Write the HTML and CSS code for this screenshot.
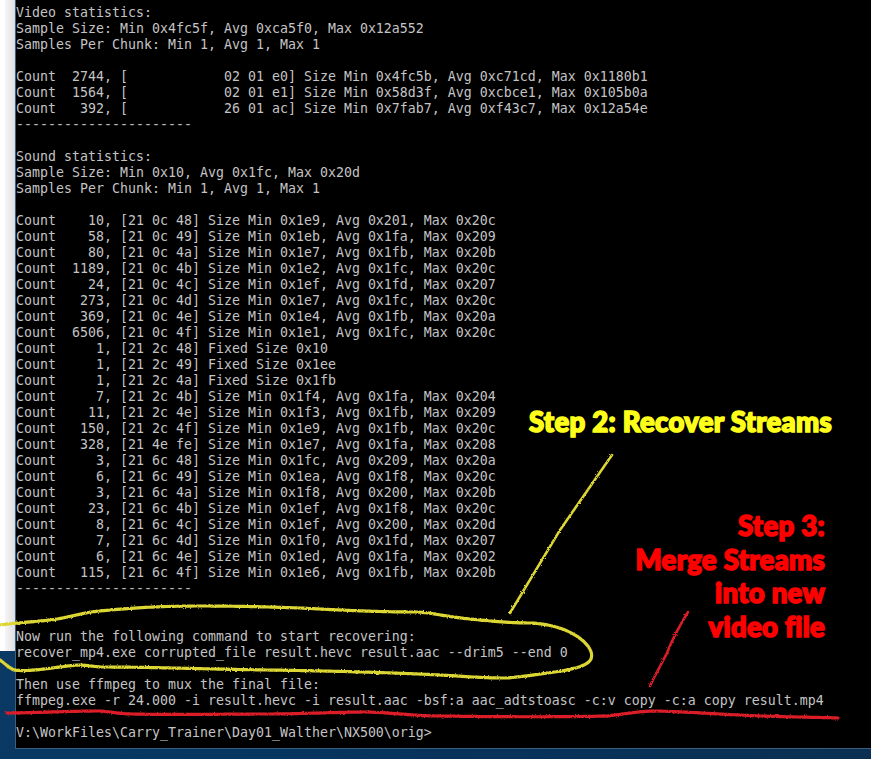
FILE: index.html
```html
<!DOCTYPE html>
<html lang="en">
<head>
<meta charset="utf-8">
<title>recover_mp4</title>
<link rel="stylesheet" href="styles.css">
</head>
<body>
<div class="desktop">
  <div class="behind"></div>
  <main class="console">
<pre class="output">Video statistics:
Sample Size: Min 0x4fc5f, Avg 0xca5f0, Max 0x12a552
Samples Per Chunk: Min 1, Avg 1, Max 1

Count  2744, [            02 01 e0] Size Min 0x4fc5b, Avg 0xc71cd, Max 0x1180b1
Count  1564, [            02 01 e1] Size Min 0x58d3f, Avg 0xcbce1, Max 0x105b0a
Count   392, [            26 01 ac] Size Min 0x7fab7, Avg 0xf43c7, Max 0x12a54e
----------------------

Sound statistics:
Sample Size: Min 0x10, Avg 0x1fc, Max 0x20d
Samples Per Chunk: Min 1, Avg 1, Max 1

Count    10, [21 0c 48] Size Min 0x1e9, Avg 0x201, Max 0x20c
Count    58, [21 0c 49] Size Min 0x1eb, Avg 0x1fa, Max 0x209
Count    80, [21 0c 4a] Size Min 0x1e7, Avg 0x1fb, Max 0x20b
Count  1189, [21 0c 4b] Size Min 0x1e2, Avg 0x1fc, Max 0x20c
Count    24, [21 0c 4c] Size Min 0x1ef, Avg 0x1fd, Max 0x207
Count   273, [21 0c 4d] Size Min 0x1e7, Avg 0x1fc, Max 0x20c
Count   369, [21 0c 4e] Size Min 0x1e4, Avg 0x1fb, Max 0x20a
Count  6506, [21 0c 4f] Size Min 0x1e1, Avg 0x1fc, Max 0x20c
Count     1, [21 2c 48] Fixed Size 0x10
Count     1, [21 2c 49] Fixed Size 0x1ee
Count     1, [21 2c 4a] Fixed Size 0x1fb
Count     7, [21 2c 4b] Size Min 0x1f4, Avg 0x1fa, Max 0x204
Count    11, [21 2c 4e] Size Min 0x1f3, Avg 0x1fb, Max 0x209
Count   150, [21 2c 4f] Size Min 0x1e9, Avg 0x1fb, Max 0x20c
Count   328, [21 4e fe] Size Min 0x1e7, Avg 0x1fa, Max 0x208
Count     3, [21 6c 48] Size Min 0x1fc, Avg 0x209, Max 0x20a
Count     6, [21 6c 49] Size Min 0x1ea, Avg 0x1f8, Max 0x20c
Count     3, [21 6c 4a] Size Min 0x1f8, Avg 0x200, Max 0x20b
Count    23, [21 6c 4b] Size Min 0x1ef, Avg 0x1f8, Max 0x20c
Count     8, [21 6c 4c] Size Min 0x1ef, Avg 0x200, Max 0x20d
Count     7, [21 6c 4d] Size Min 0x1f0, Avg 0x1fd, Max 0x207
Count     6, [21 6c 4e] Size Min 0x1ed, Avg 0x1fa, Max 0x202
Count   115, [21 6c 4f] Size Min 0x1e6, Avg 0x1fb, Max 0x20b
----------------------


Now run the following command to start recovering:
recover_mp4.exe corrupted_file result.hevc result.aac --drim5 --end 0

Then use ffmpeg to mux the final file:
ffmpeg.exe -r 24.000 -i result.hevc -i result.aac -bsf:a aac_adtstoasc -c:v copy -c:a copy result.mp4

V:\WorkFiles\Carry_Trainer\Day01_Walther\NX500\orig&gt;</pre>
  </main>
  <svg class="scribbles" width="871" height="759" viewBox="0 0 871 759" aria-hidden="true">
    <defs>
      <filter id="rough" x="0" y="0" width="871" height="759" filterUnits="userSpaceOnUse">
        <feTurbulence type="fractalNoise" baseFrequency="0.7" numOctaves="2" seed="4"/>
        <feDisplacementMap in="SourceGraphic" scale="2.5"/>
      </filter>
    </defs>
    <g class="ink" filter="url(#rough)">
      <path class="ink-yellow" d="M0 625C14 623 32 622 50 620C68 618 84 612 100 611C130 608 160 606 200 606C240 606 270 607 300 608C340 610 375 612 415 612C430 612 440 616 470 619C490 621 510 623 530 623C552 624 570 630 582 640C590 647 593 653 591 659C587 666 576 668 562 671C540 674 522 677 505 678C480 678 460 676 440 675C400 673 340 671 267 670C200 669 150 667 100 667C90 666 80 664 68 666C50 668 30 672 14 670C8 667 4 663 0 660"/>
      <path class="ink-yellow ink-thin" d="M612 455L560 530L510 613"/>
      <path class="ink-red" d="M7 713C30 713 70 711 100 711C112 712 120 714 133 714C180 715 225 714 267 714C300 714 340 712 367 712C395 713 415 716 440 716C500 717 570 717 607 716C625 714 640 711 657 711C690 712 715 714 740 715C775 717 810 717 838 718"/>
      <path class="ink-red ink-thin" d="M688 612C680 625 672 640 667 653C661 665 655 675 650 686"/>
    </g>
  </svg>
  <p class="step step-two">Step 2: Recover Streams</p>
  <p class="step step-three">Step 3:<br>Merge Streams<br>into new<br>video file</p>
</div>
</body>
</html>
```
FILE: styles.css
```css
html, body {
  margin: 0;
  padding: 0;
  overflow: hidden;
}

.desktop {
  position: relative;
  display: flex;
  align-items: flex-start;
  width: 871px;
  height: 759px;
  background: linear-gradient(100deg, #0b3a66 0%, #06355f 40%, #0a2f52 100%);
}

.behind {
  flex: 0 0 15px;
  height: 651px;
  background: linear-gradient(90deg, #ffffff 0 5px, #f6f6f7 5px, #dfdfe1 100%);
}

.console {
  flex: 1;
  height: 749px;
  box-sizing: border-box;
  background: #000;
  border-left: 1px solid #3f5f78;
  border-bottom: 1px solid #37607f;
  padding-top: 5px;
  overflow: hidden;
}

.output {
  margin: 0;
  font-family: "DejaVu Sans Mono", "Liberation Mono", monospace;
  font-size: 13.25px;
  line-height: 16px;
  letter-spacing: 0.02px;
  color: #c4c4c4;
  white-space: pre;
}

.scribbles {
  position: absolute;
  left: 0;
  top: 0;
}

.ink path {
  fill: none;
  stroke-width: 3.2;
  stroke-linecap: round;
  stroke-linejoin: round;
  stroke-dasharray: 3 0.5;
}

.ink .ink-thin {
  stroke-width: 2.6;
}

.ink-yellow { stroke: #dcd636; }
.ink-red { stroke: #dc1f28; }

.step {
  position: absolute;
  margin: 0;
  font-family: "Lato", "Open Sans", sans-serif;
  font-weight: 900;
  white-space: nowrap;
  letter-spacing: 0.3px;
  -webkit-text-stroke: 1.6px currentColor;
}

.step-two {
  left: 529px;
  top: 405px;
  font-size: 27.5px;
  line-height: 34px;
  color: #ffff1a;
}

.step-three {
  right: 46px;
  top: 509px;
  font-size: 27.5px;
  line-height: 33.6px;
  text-align: right;
  color: #ff0000;
}
```
